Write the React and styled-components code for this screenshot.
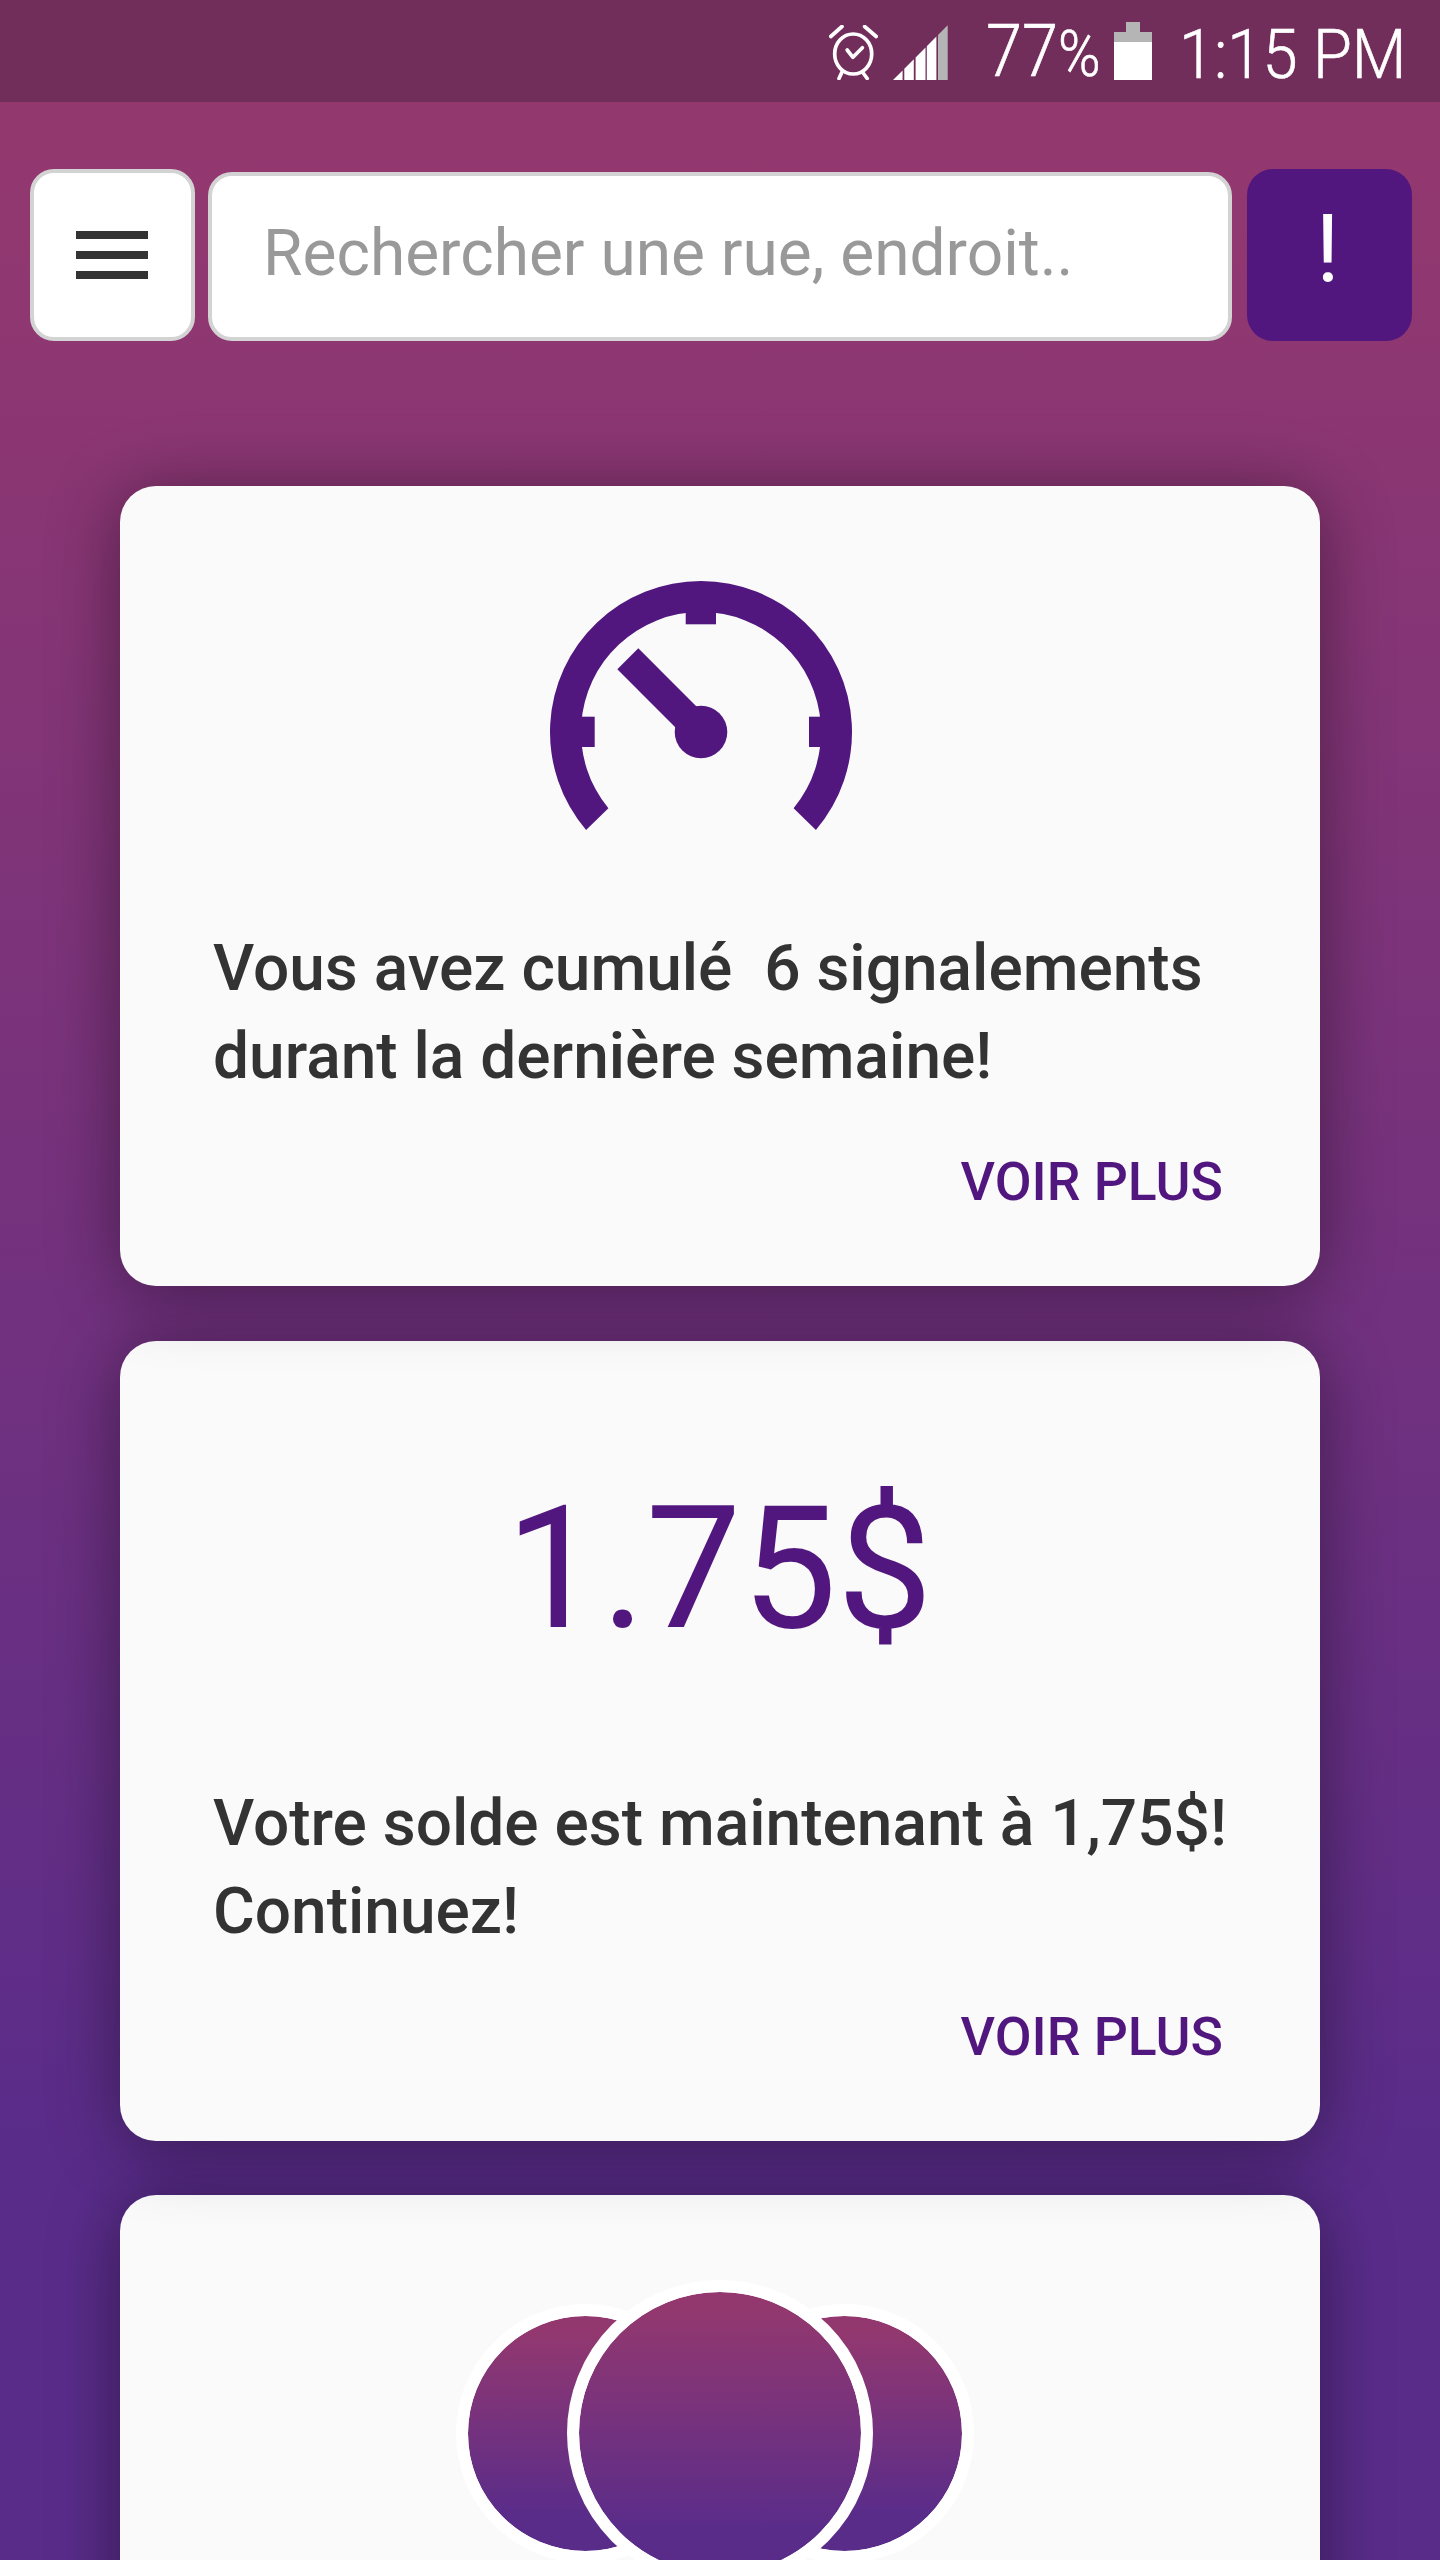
import React from "react";
import styled, { createGlobalStyle } from "styled-components";

const PURPLE = "#52177e";

const GlobalStyle = createGlobalStyle`
  html, body {
    margin: 0;
    padding: 0;
    background: #592c8a;
  }
  * {
    box-sizing: border-box;
  }
`;

function AlarmIcon() {
  return (
    <svg width="49" height="55" viewBox="0 0 49 55" fill="none" stroke="#fff" strokeWidth="3.7" strokeLinecap="round" strokeLinejoin="round">
      <ellipse cx="24.2" cy="29" rx="18.5" ry="20" />
      <path d="M18.2 25L23.9 32.3L33.4 22.7" />
      <path d="M1.8 11.5L13 1.5M35.6 1.5L47.2 11.5" />
      <path d="M13 47L10 53.5M33.4 47L38.2 53.5" />
    </svg>
  );
}

function SignalIcon() {
  return (
    <svg width="55" height="55" viewBox="0 0 55 55">
      <path fill="#fff" d="M0 55L9.6 45.4V55ZM11.3 43.7L20.8 34.2V55H11.3ZM22.6 32.4L32.5 22.5V55H22.6ZM33.8 21.2L43.4 11.6V55H33.8Z" />
      <path fill="#b5b5b5" d="M45 10L54.7 0.3V55H45Z" />
    </svg>
  );
}

function BatteryIcon() {
  return (
    <svg width="38" height="58" viewBox="0 0 38 58">
      <path fill="#b5b5b5" d="M12 0H26V10H38V20H0V10H12Z" />
      <rect fill="#fff" y="20" width="38" height="38" />
    </svg>
  );
}

function GaugeIcon() {
  return (
    <svg width="302" height="250" viewBox="0 0 302 250" fill={PURPLE}>
      <path d="M36.1 249A151 151 0 1 1 265.9 249L243.6 227.3A120 120 0 1 0 58.4 227.3Z" />
      <rect x="135.7" y="20" width="30.3" height="23.3" />
      <rect x="20" y="135.7" width="24.7" height="30.3" />
      <rect x="259" y="135.7" width="24.7" height="30.3" />
      <path d="M67.3 88.3L88.3 67.3L151 130L130 151Z" />
      <circle cx="151" cy="151" r="26.3" />
    </svg>
  );
}

export default function App() {
  return (
    <Screen>
      <GlobalStyle />
      <StatusBar>
        <AlarmIcon />
        <SignalSlot>
          <SignalIcon />
        </SignalSlot>
        <Percent>
          77<small>%</small>
        </Percent>
        <BatterySlot>
          <BatteryIcon />
        </BatterySlot>
        <Clock>1:15 PM</Clock>
      </StatusBar>

      <TopBar>
        <MenuButton type="button" aria-label="Menu">
          <MenuBar />
          <MenuBar />
          <MenuBar />
        </MenuButton>
        <SearchBox>Rechercher une rue, endroit..</SearchBox>
        <AlertButton type="button">!</AlertButton>
      </TopBar>

      <CardList>
        <Card $layer={3}>
          <GaugeSlot>
            <GaugeIcon />
          </GaugeSlot>
          <CardText>Vous avez cumulé&nbsp; 6 signalements durant la dernière semaine!</CardText>
          <MoreLink>VOIR PLUS</MoreLink>
        </Card>

        <Card $layer={2}>
          <Amount>1.75$</Amount>
          <CardText>Votre solde est maintenant à 1,75$! Continuez!</CardText>
          <MoreLink>VOIR PLUS</MoreLink>
        </Card>

        <Card $layer={1}>
          <Bubbles>
            <Bubble $size={259} />
            <Bubble $size={306} $front />
            <Bubble $size={259} />
          </Bubbles>
        </Card>
      </CardList>
    </Screen>
  );
}

/* -------------------- Styled Components -------------------- */

const Screen = styled.div`
  height: 2560px;
  overflow: hidden;
  font-family: "Roboto", "Liberation Sans", sans-serif;
  background: linear-gradient(#93386f 6%, #592c8a 85%);
`;

const StatusBar = styled.div`
  display: flex;
  align-items: flex-end;
  justify-content: flex-end;
  height: 102px;
  padding: 0 37px 22px 0;
  background: #722e5b;
  color: #fff;
`;

const SignalSlot = styled.div`
  display: flex;
  margin-left: 15px;
`;

const BatterySlot = styled.div`
  display: flex;
  margin-left: 14px;
`;

const Percent = styled.div`
  width: 114px;
  margin-left: 38px;
  font-size: 72px;
  font-weight: 300;
  line-height: 50px;
  white-space: nowrap;
  -webkit-text-stroke: 0.6px #fff;
  transform: scaleX(0.9);
  transform-origin: left center;

  small {
    font-size: 64px;
  }
`;

const Clock = styled.div`
  width: 224px;
  margin-left: 27px;
  font-size: 68px;
  font-weight: 300;
  line-height: 50px;
  white-space: nowrap;
  -webkit-text-stroke: 0.6px #fff;
  transform: scaleX(0.93);
  transform-origin: left center;
`;

const TopBar = styled.div`
  display: flex;
  align-items: flex-end;
  padding: 67px 28px 0 30px;
`;

const MenuButton = styled.button`
  display: flex;
  flex-direction: column;
  justify-content: center;
  align-items: center;
  gap: 12px;
  width: 165px;
  height: 172px;
  padding: 0 2px 0 0;
  background: #fff;
  border: 4px solid #d3d3d3;
  border-radius: 24px;
`;

const MenuBar = styled.span`
  display: block;
  width: 72px;
  height: 8px;
  background: #333;
`;

const SearchBox = styled.div`
  display: flex;
  align-items: center;
  flex: 1;
  height: 169px;
  margin: 0 15px 0 13px;
  padding: 0 0 6px 51px;
  background: #fff;
  border: 4px solid #d3d3d3;
  border-radius: 24px;
  color: #999;
  font-size: 64px;
`;

const AlertButton = styled.button`
  width: 165px;
  height: 172px;
  padding: 0 4px 12px 0;
  background: ${PURPLE};
  border: none;
  border-radius: 26px;
  color: #fff;
  font-family: inherit;
  font-size: 94px;
  font-weight: 400;
`;

const CardList = styled.div`
  display: flex;
  flex-direction: column;
  gap: 54.5px;
  margin-top: 145px;
  padding: 0 120px;
`;

const Card = styled.div`
  position: relative;
  z-index: ${(props) => props.$layer};
  display: flex;
  flex-direction: column;
  flex-shrink: 0;
  height: 800px;
  padding: 0 80px 0 94px;
  background: #fafafa;
  border-radius: 36px;
  box-shadow: 0 6px 70px rgba(0, 0, 0, 0.42);
`;

const GaugeSlot = styled.div`
  display: flex;
  justify-content: center;
  height: 249px;
  margin: 95px 0 0 -52px;
`;

const CardText = styled.p`
  margin: 95px 0 0 -1px;
  color: #333;
  font-size: 64px;
  font-weight: 500;
  line-height: 88px;
`;

const MoreLink = styled.div`
  margin: 50px 17px 0 0;
  color: ${PURPLE};
  font-size: 53.5px;
  font-weight: 500;
  line-height: 62px;
  text-align: right;
`;

const Amount = styled.div`
  height: 252px;
  margin: 128px 0 -36px -16px;
  color: ${PURPLE};
  font-size: 170px;
  line-height: 200px;
  text-align: center;
`;

const Bubbles = styled.div`
  display: flex;
  align-items: center;
  justify-content: center;
  height: 306px;
  margin: 85px 0 0 -24px;
`;

const Bubble = styled.div`
  position: ${(props) => (props.$front ? "relative" : "static")};
  flex-shrink: 0;
  width: ${(props) => props.$size}px;
  height: ${(props) => props.$size}px;
  margin: ${(props) => (props.$front ? "0 -158px 0 -148px" : "0")};
  background: linear-gradient(#93386f 6%, #592c8a 85%) padding-box, #fff;
  border: 12px solid #fff;
  border-radius: 50%;
`;
